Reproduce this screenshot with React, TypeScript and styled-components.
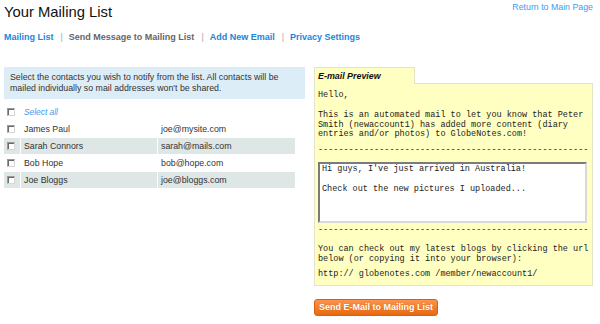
import React from "react";
import styled, { createGlobalStyle } from "styled-components";

const Global = createGlobalStyle`
  html, body { margin: 0; padding: 0; background: #fff; }
  body { font-family: "Liberation Sans", Arial, sans-serif; color: #333; }
  * { box-sizing: border-box; }
`;

const Page = styled.div`
  width: 600px;
  padding: 2px 7px 0 4px;
`;

const Header = styled.header`
  display: flex;
  justify-content: space-between;
  align-items: flex-start;
`;

const Title = styled.h1`
  margin: 0;
  font-size: 14.8px;
  line-height: 20px;
  font-weight: normal;
  color: #111;
`;

const TopLink = styled.a`
  font-size: 8.8px;
  line-height: 11px;
  color: #3d9bef;
  text-decoration: none;
`;

const Nav = styled.nav`
  display: flex;
  align-items: center;
  margin-top: 10px;
  font-size: 9px;
  line-height: 11px;
  font-weight: bold;
`;

const NavItem = styled.a<{ $active?: boolean }>`
  color: ${(p) => (p.$active ? "#666" : "#1b84dc")};
  text-decoration: none;
`;

const Sep = styled.span`
  color: #aaa;
  font-weight: normal;
  margin: 0 6px 0 7px;
`;

const Main = styled.div`
  display: flex;
  gap: 9px;
  margin-top: 24px;
  align-items: flex-start;
`;

const LeftCol = styled.div`
  width: 301px;
  display: flex;
  flex-direction: column;
`;

const InfoBox = styled.p`
  margin: 0;
  background: #ddedf7;
  padding: 5px 6px;
  font-size: 8.8px;
  line-height: 11px;
  color: #333;
`;

const List = styled.div`
  display: flex;
  flex-direction: column;
  gap: 1px;
  margin-top: 5px;
  width: 291px;
`;

const Row = styled.div`
  display: grid;
  grid-template-columns: 16px 136px 137px;
  column-gap: 1px;
  height: 16px;
`;

const Cell = styled.div<{ $shade?: boolean; $span?: number }>`
  display: flex;
  align-items: center;
  padding-left: 3px;
  background: ${(p) => (p.$shade ? "#dfe6e6" : "transparent")};
  font-size: 8.8px;
  color: #333;
  white-space: nowrap;
  ${(p) => (p.$span ? `grid-column: span ${p.$span};` : "")}
`;

const Check = styled.input.attrs({ type: "checkbox" })`
  appearance: none;
  -webkit-appearance: none;
  margin: 0;
  width: 8px;
  height: 8px;
  background: #fff;
  border: 1px solid #9a9a9a;
  border-right-color: #d6d6d6;
  border-bottom-color: #d6d6d6;
  box-shadow: inset 1px 1px 0 #6a6a6a;
`;

const SelectAll = styled.a`
  font-style: italic;
  color: #3d9bef;
  font-size: 8.4px;
  text-decoration: none;
`;

const RightCol = styled.div`
  width: 279px;
  display: flex;
  flex-direction: column;
`;

const Tab = styled.div`
  width: 101px;
  height: 17px;
  background: #ffffc1;
  border: 1px solid #e4e4c6;
  border-bottom: none;
  padding-left: 3px;
  font-size: 8.9px;
  line-height: 16px;
  font-weight: bold;
  font-style: italic;
  color: #111;
  position: relative;
  z-index: 1;
  margin-bottom: -1px;
`;

const Panel = styled.div`
  height: 203px;
  background: #ffffc1;
  border: 1px solid #e4e4c6;
  padding: 4px 3px 0 3px;
  font-family: "Liberation Mono", "Courier New", monospace;
  font-size: 8.5px;
  line-height: 9.6px;
  color: #222;
`;

const Mono = styled.p<{ $mt: number }>`
  margin: ${(p) => p.$mt}px 0 0 0;
  white-space: nowrap;
`;

const MessageBox = styled.textarea`
  display: block;
  margin: 6px 0 0 0;
  width: 269px;
  height: 61px;
  resize: none;
  background: #fff;
  border: 2px solid;
  border-color: #7b7b7b #d8d8d8 #d8d8d8 #7b7b7b;
  padding: 0 2px;
  font-family: "Liberation Mono", "Courier New", monospace;
  font-size: 8.5px;
  line-height: 10px;
  color: #222;
  overflow: hidden;
`;

const SendButton = styled.button`
  margin-top: 13px;
  align-self: flex-start;
  height: 17px;
  padding: 0 4px;
  border: 1px solid #d9600f;
  border-radius: 3px;
  background: linear-gradient(#fa954e, #e8680f);
  color: #fff;
  font-family: "Liberation Sans", Arial, sans-serif;
  font-size: 9px;
  font-weight: bold;
  line-height: 15px;
  text-shadow: 0 0 1px rgba(150, 60, 0, 0.4);
`;

const contacts = [
  { name: "James Paul", email: "joe@mysite.com" },
  { name: "Sarah Connors", email: "sarah@mails.com" },
  { name: "Bob Hope", email: "bob@hope.com" },
  { name: "Joe Bloggs", email: "joe@bloggs.com" },
];

const dashes = "-----------------------------------------------------";

export default function App() {
  return (
    <>
      <Global />
      <Page>
        <Header>
          <Title>Your Mailing List</Title>
          <TopLink href="#">Return to Main Page</TopLink>
        </Header>
        <Nav>
          <NavItem href="#">Mailing List</NavItem>
          <Sep>|</Sep>
          <NavItem href="#" $active>Send Message to Mailing List</NavItem>
          <Sep>|</Sep>
          <NavItem href="#">Add New Email</NavItem>
          <Sep>|</Sep>
          <NavItem href="#">Privacy Settings</NavItem>
        </Nav>
        <Main>
          <LeftCol>
            <InfoBox>
              Select the contacts you wish to notify from the list. All contacts will be
              <br />
              mailed individually so mail addresses won't be shared.
            </InfoBox>
            <List>
              <Row>
                <Cell><Check /></Cell>
                <Cell $span={2}><SelectAll href="#">Select all</SelectAll></Cell>
              </Row>
              {contacts.map((c, i) => (
                <Row key={c.email}>
                  <Cell $shade={i % 2 === 1}><Check /></Cell>
                  <Cell $shade={i % 2 === 1}>{c.name}</Cell>
                  <Cell $shade={i % 2 === 1}>{c.email}</Cell>
                </Row>
              ))}
            </List>
          </LeftCol>
          <RightCol>
            <Tab>E-mail Preview</Tab>
            <Panel>
              <Mono $mt={3}>Hello,</Mono>
              <Mono $mt={10.5}>
                This is an automated mail to let you know that Peter
                <br />
                Smith (newaccount1) has added more content (diary
                <br />
                entries and/or photos) to GlobeNotes.com!
              </Mono>
              <Mono $mt={6.5}>{dashes}</Mono>
              <MessageBox
                readOnly
                defaultValue={"Hi guys, I've just arrived in Australia!\n\nCheck out the new pictures I uploaded..."}
              />
              <Mono $mt={3}>{dashes}</Mono>
              <Mono $mt={9.5}>
                You can check out my latest blogs by clicking the url
                <br />
                below (or copying it into your browser):
              </Mono>
              <Mono $mt={5.5}>http:// globenotes.com /member/newaccount1/</Mono>
            </Panel>
            <SendButton>Send E-Mail to Mailing List</SendButton>
          </RightCol>
        </Main>
      </Page>
    </>
  );
}
